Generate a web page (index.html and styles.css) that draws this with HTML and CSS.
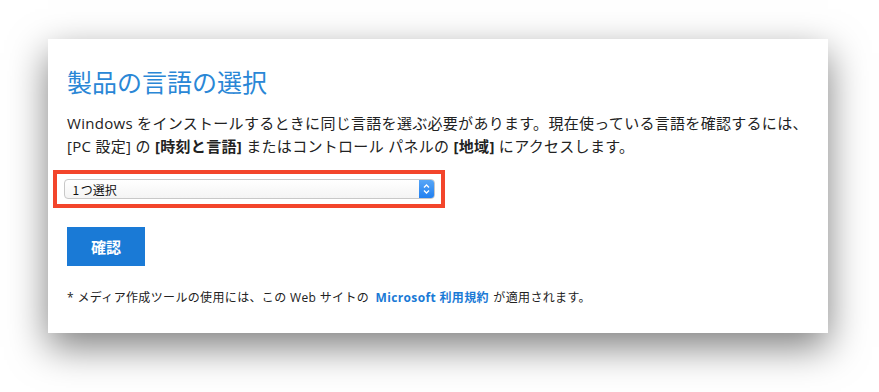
FILE: index.html
```html
<!DOCTYPE html>
<html lang="ja">
<head>
<meta charset="utf-8">
<link rel="stylesheet" href="styles.css">
</head>
<body>
<div class="stage">
  <div class="card">
    <h1 class="title">製品の言語の選択</h1>
    <p class="lead">Windows をインストールするときに同じ言語を選ぶ必要があります。現在使っている言語を確認するには、<br>[PC 設定] の <b>[時刻と言語]</b> またはコントロール パネルの <b>[地域]</b> にアクセスします。</p>
    <div class="highlight">
      <div class="select">
        <span class="select-text">1 つ選択</span>
        <span class="spinner">
          <svg width="9" height="12" viewBox="0 0 9 12"><path d="M2 4.5 L4.5 2 L7 4.5" fill="none" stroke="#fff" stroke-width="1.3"/><path d="M2 7.5 L4.5 10 L7 7.5" fill="none" stroke="#fff" stroke-width="1.3"/></svg>
        </span>
      </div>
    </div>
    <button class="confirm">確認</button>
    <p class="note">* メディア作成ツールの使用には、この Web サイトの <a class="link">Microsoft 利用規約</a> が適用されます。</p>
  </div>
</div>
</body>
</html>
```
FILE: styles.css
```css
html, body {
  margin: 0;
  padding: 0;
  background: #fff;
}
body {
  font-family: "Open Sans", "Noto Sans CJK JP", sans-serif;
  color: #222;
}
.stage {
  height: 392px;
  box-sizing: border-box;
  padding: 39px 0 0 48px;
}
.card {
  width: 780px;
  height: 294px;
  box-sizing: border-box;
  background: #fff;
  box-shadow: 0 14px 36px rgba(0, 0, 0, 0.5);
  padding: 24px 19px 0 19px;
}
.title {
  margin: 0;
  font-weight: 400;
  font-size: 25px;
  line-height: 36px;
  color: #2a87d6;
  font-family: "Noto Sans CJK JP", sans-serif;
}
.lead {
  margin: 13px 0 0 0;
  font-size: 15px;
  line-height: 23px;
  letter-spacing: 0.3px;
}
.lead b {
  font-weight: 700;
}
.highlight {
  margin: 12px 0 0 -14px;
  width: 384px;
  height: 30px;
  border: 4px solid #f3452b;
  display: flex;
  align-items: center;
  justify-content: center;
}
.select {
  width: 371px;
  height: 20px;
  box-sizing: border-box;
  border: 1px solid #c8c8c8;
  border-radius: 4px;
  background: linear-gradient(#fff, #f4f4f4);
  display: flex;
  align-items: center;
  justify-content: space-between;
  padding-left: 8px;
  overflow: hidden;
}
.select-text {
  font-size: 12px;
  color: #111;
  font-family: "Noto Sans CJK JP", sans-serif;
  word-spacing: -1px;
}
.spinner {
  width: 16px;
  height: 20px;
  background: linear-gradient(#5aa8f7, #1f7ef0);
  display: flex;
  align-items: center;
  justify-content: center;
  border-radius: 0 4px 4px 0;
  margin-right: -1px;
}
.confirm {
  display: block;
  margin-top: 19px;
  width: 78px;
  height: 39px;
  border: 0;
  background: #1a7ad6;
  color: #fff;
  font-size: 15px;
  font-weight: 700;
  font-family: "Noto Sans CJK JP", sans-serif;
  padding: 0;
}
.note {
  margin: 24px 0 0 0;
  font-size: 12px;
  line-height: 16px;
  letter-spacing: 0.35px;
}
.link {
  color: #1a7ad6;
  font-weight: 700;
  margin: 0 1px 0 3px;
}
```
